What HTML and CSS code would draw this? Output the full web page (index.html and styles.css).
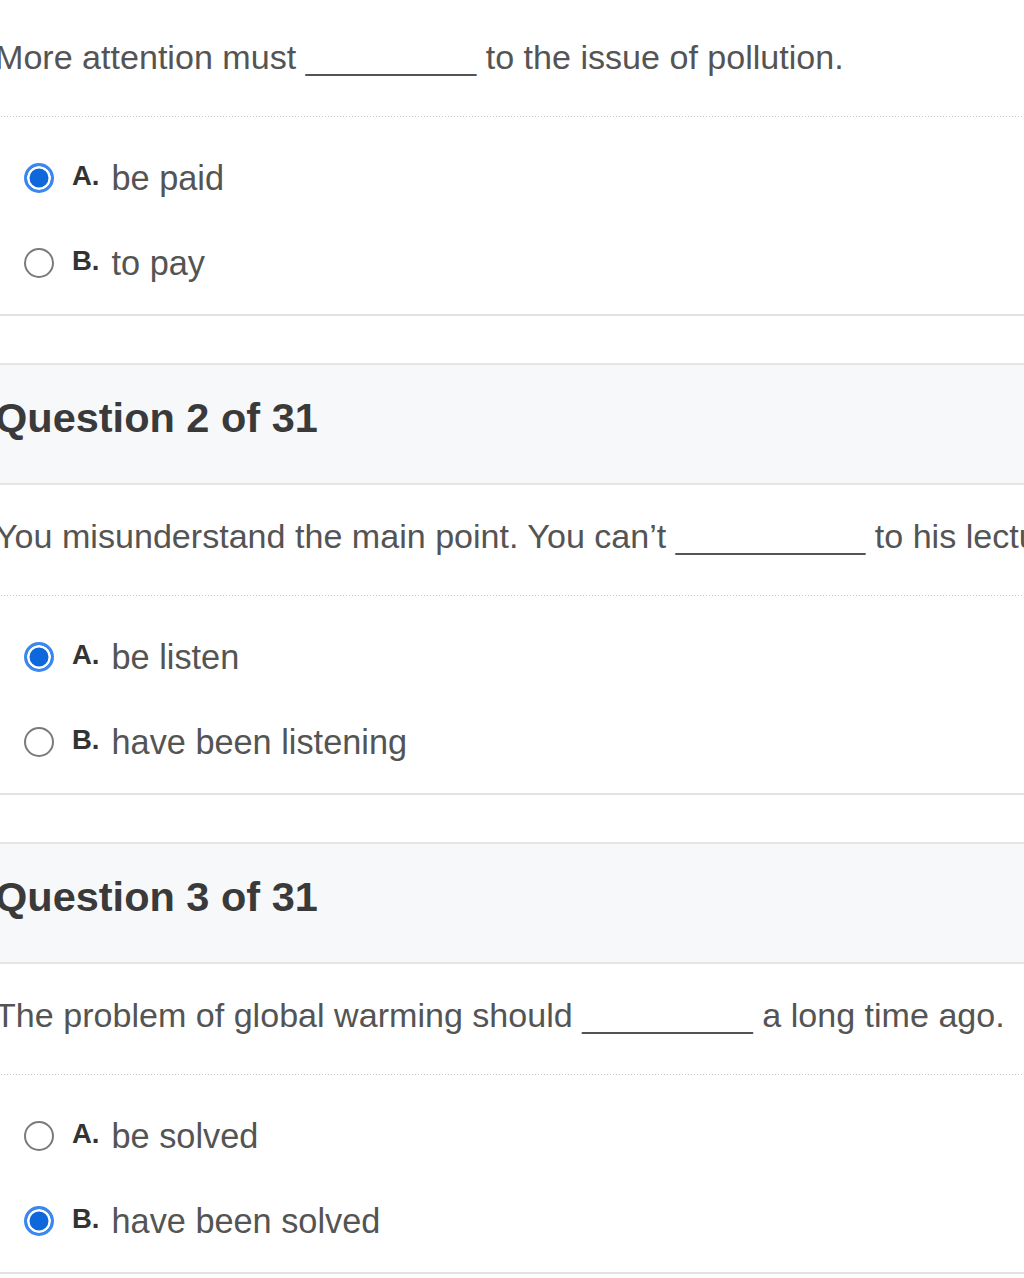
FILE: index.html
```html
<!DOCTYPE html>
<html lang="en">
<head>
<meta charset="utf-8">
<title>Quiz</title>
<link rel="stylesheet" href="styles.css">
</head>
<body>
<div class="page">
  <section class="question first">
    <div class="q-text">More attention must _________ to the issue of pollution.</div>
    <div class="options">
      <div class="option"><span class="radio checked"></span><span class="label">A.</span><span class="opt-text">be paid</span></div>
      <div class="option"><span class="radio"></span><span class="label">B.</span><span class="opt-text">to pay</span></div>
    </div>
  </section>

  <section class="question">
    <h2 class="q-head">Question 2 of 31</h2>
    <div class="q-text">You misunderstand the main point. You can’t __________ to his lecture.</div>
    <div class="options">
      <div class="option"><span class="radio checked"></span><span class="label">A.</span><span class="opt-text">be listen</span></div>
      <div class="option"><span class="radio"></span><span class="label">B.</span><span class="opt-text">have been listening</span></div>
    </div>
  </section>

  <section class="question">
    <h2 class="q-head">Question 3 of 31</h2>
    <div class="q-text">The problem of global warming should _________ a long time ago.</div>
    <div class="options">
      <div class="option"><span class="radio"></span><span class="label">A.</span><span class="opt-text">be solved</span></div>
      <div class="option"><span class="radio checked"></span><span class="label">B.</span><span class="opt-text">have been solved</span></div>
    </div>
  </section>
</div>
</body>
</html>
```
FILE: styles.css
```css
html, body {
  margin: 0;
  padding: 0;
  background: #ffffff;
  overflow: hidden;
}

body {
  font-family: "Liberation Sans", Arial, sans-serif;
  color: #505050;
}

.page {
  margin-left: -5px;
  width: calc(100% + 5px);
  overflow: hidden;
}

.question {
  margin-top: 47px;
}

.question.first {
  margin-top: 0;
}

.q-head {
  margin: 0;
  padding: 29px 0 41px 0;
  background: #f7f8fa;
  border-top: 2px solid #e4e5e7;
  border-bottom: 2px solid #e4e5e7;
  font-size: 41.5px;
  line-height: 48px;
  font-weight: bold;
  color: #3a3a3a;
  white-space: nowrap;
}

.q-text {
  padding: 31px 0 40px 0;
  font-size: 34.1px;
  line-height: 40px;
  white-space: nowrap;
  color: #545454;
  background-image: linear-gradient(to right, #c6c6c6 1px, transparent 1px);
  background-size: 3px 1px;
  background-repeat: repeat-x;
  background-position: left bottom;
  border-bottom: 1px solid transparent;
}

.question.first .q-text {
  padding-top: 37px;
}

.options {
  display: flex;
  flex-direction: column;
  gap: 45px;
  padding: 40px 0 31px 29px;
  border-bottom: 2px solid #e2e2e2;
}

.option {
  display: flex;
  align-items: flex-start;
  height: 40px;
}

.radio {
  box-sizing: border-box;
  flex: none;
  width: 30px;
  height: 30px;
  margin-top: 5px;
  margin-right: 18px;
  border-radius: 50%;
  border: 2px solid #7a7a7a;
  background: #ffffff;
}

.radio.checked {
  border: 3px solid #3a87ef;
  background: #0f67dc;
  box-shadow: inset 0 0 0 2.5px #ffffff;
}

.label {
  flex: none;
  margin-top: 4px;
  margin-right: 12px;
  font-size: 27.5px;
  line-height: 27px;
  font-weight: bold;
  color: #333333;
}

.opt-text {
  font-size: 34.3px;
  line-height: 40px;
  color: #545454;
  white-space: nowrap;
}
```
